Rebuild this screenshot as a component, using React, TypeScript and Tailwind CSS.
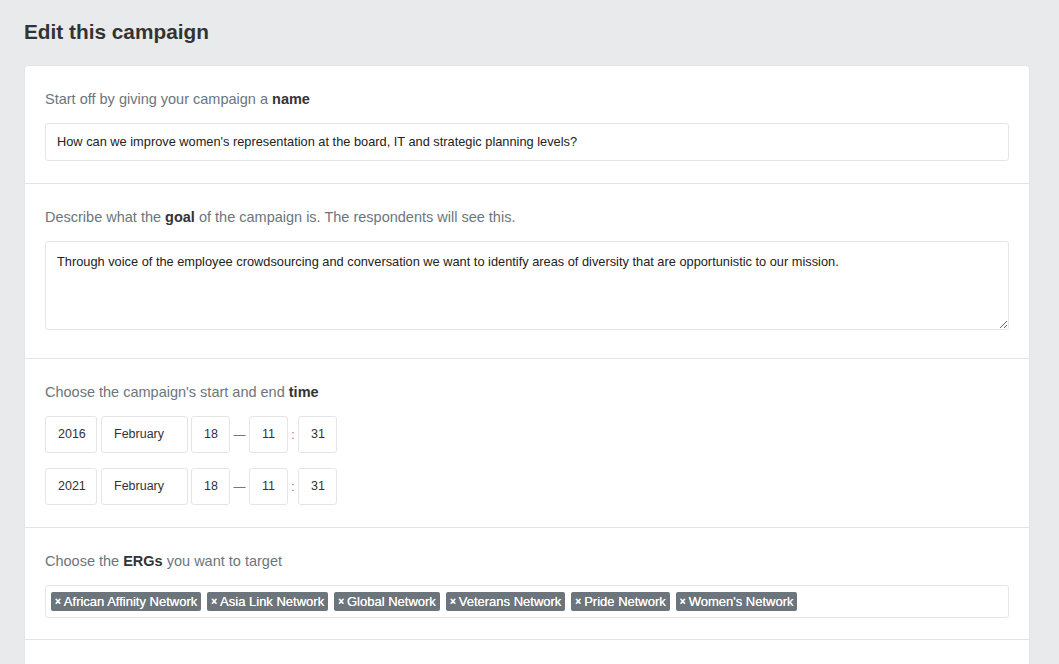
const ergs = [
  "African Affinity Network",
  "Asia Link Network",
  "Global Network",
  "Veterans Network",
  "Pride Network",
  "Women's Network",
];

const dates = [
  { year: "2016", month: "February", day: "18", hour: "11", minute: "31" },
  { year: "2021", month: "February", day: "18", hour: "11", minute: "31" },
];

function Label({ children }: { children: React.ReactNode }) {
  return <p className="h-[22px] leading-[22px] text-[14.5px] text-[#6c757d] mb-[13px]">{children}</p>;
}

function Box({ children, className }: { children: React.ReactNode; className: string }) {
  return (
    <div className={"h-[37px] flex items-center px-[12px] border border-[#e3e5e8] rounded-[3px] text-[12.5px] text-[#333] " + className}>
      {children}
    </div>
  );
}

export default function App() {
  return (
    <div
      className="min-h-screen bg-[#e9eaec] pl-[24px] pr-[29px] pt-[19px]"
      style={{ fontFamily: '"Liberation Sans", Arial, sans-serif' }}
    >
      <h1 className="text-[20.8px] font-bold text-[#333] leading-[26px] mb-[20px]">Edit this campaign</h1>

      <div className="bg-white rounded-[4px] border border-[#e2e4e7] min-h-[620px]">
        <section className="px-[20px] pt-[22px] pb-[22px] border-b border-[#e2e4e7]">
          <Label>
            Start off by giving your campaign a <b className="font-bold text-[#333]">name</b>
          </Label>
          <div className="h-[38px] flex items-center px-[11px] border border-[#e3e5e8] rounded-[3px] text-[12.8px] text-[#222]">
            How can we improve women's representation at the board, IT and strategic planning levels?
          </div>
        </section>

        <section className="px-[20px] pt-[22px] pb-[28px] border-b border-[#e2e4e7]">
          <Label>
            Describe what the <b className="font-bold text-[#333]">goal</b> of the campaign is. The respondents will see this.
          </Label>
          <textarea
            readOnly
            className="block w-full h-[89px] px-[11px] py-[12px] border border-[#e3e5e8] rounded-[3px] text-[12.8px] text-[#222] leading-[16px] outline-none resize-y"
            value="Through voice of the employee crowdsourcing and conversation we want to identify areas of diversity that are opportunistic to our mission."
          />
        </section>

        <section className="px-[20px] pt-[22px] pb-[22px] border-b border-[#e2e4e7]">
          <Label>
            Choose the campaign's start and end <b className="font-bold text-[#333]">time</b>
          </Label>
          <div className="flex flex-col gap-[15px]">
            {dates.map((d, i) => (
              <div key={i} className="flex items-center">
                <Box className="w-[52px]">{d.year}</Box>
                <Box className="w-[87px] ml-[4px]">{d.month}</Box>
                <Box className="w-[39px] ml-[3px]">{d.day}</Box>
                <span className="w-[19px] text-center text-[12px] text-[#777]">—</span>
                <Box className="w-[39px]">{d.hour}</Box>
                <span className="w-[10px] text-center text-[12px] text-[#777]">:</span>
                <Box className="w-[39px]">{d.minute}</Box>
              </div>
            ))}
          </div>
        </section>

        <section className="px-[20px] pt-[22px] pb-[21px] border-b border-[#e2e4e7]">
          <Label>
            Choose the <b className="font-bold text-[#333]">ERGs</b> you want to target
          </Label>
          <div className="h-[33px] flex items-center gap-[6px] px-[5px] border border-[#e3e5e8] rounded-[3px]">
            {ergs.map((e) => (
              <span
                key={e}
                className="h-[19px] flex items-center px-[4px] rounded-[2px] bg-[#6c747c] text-white text-[13px] leading-none [text-shadow:0_0_0.4px_white]"
              >
                <span className="text-[10px] font-bold mr-[3px]">×</span>
                {e}
              </span>
            ))}
          </div>
        </section>
      </div>
    </div>
  );
}
